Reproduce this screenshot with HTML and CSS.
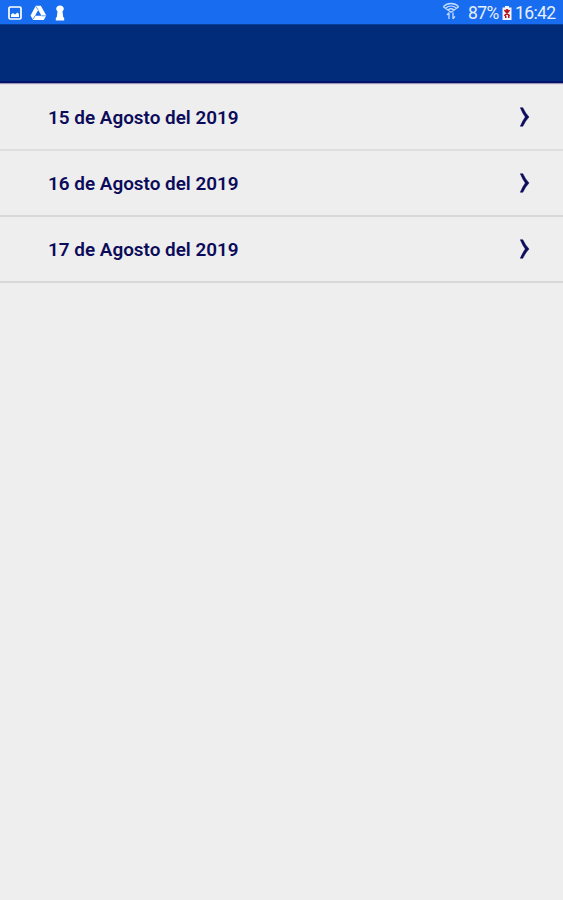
FILE: index.html
```html
<!DOCTYPE html>
<html lang="es">
<head>
<meta charset="utf-8">
<title>Agenda</title>
<link rel="stylesheet" href="styles.css">
</head>
<body>
<div class="status">
  <div class="notifications">
    <svg width="14" height="16" viewBox="0 0 14 16"><rect x="1" y="2" width="12" height="12" rx="1.3" fill="none" stroke="#fff" stroke-width="1.7"/><path d="M3 12V9.500l2-1.500 2 1.500 2.500-2L11 9v3z" fill="#fff"/></svg>
    <svg width="17" height="16" viewBox="0 0 17 16"><path fill="#fff" fill-rule="evenodd" d="M5.800 .8h5l5.500 9.700-2.500 4.500H3.200L.5 10.500zM8.200 5L5 10.800h6.500z"/><path d="M5 10.800L3.200 14M8.200 5L6 1.500M11.500 10.800H16" stroke="#186cf0" stroke-width=".7"/></svg>
    <svg width="10" height="16" viewBox="0 0 10 16"><path fill="#fff" d="M5 .5c2.300 0 3.800 1.300 3.800 3.200 0 1.300-.6 2-1.300 2.600L8.200 12l1 1v2.500H.8V13l1-1 .7-5.700C1.800 5.700 1.200 5 1.200 3.700 1.200 1.800 2.700.5 5 .5z"/></svg>
  </div>
  <div class="indicators">
    <svg class="wifi" width="18" height="18" viewBox="0 0 18 18" fill="none" stroke="#c5dcff" stroke-width="1.300"><path d="M1.300 4.700C5.500 .4 12.500 .4 16.700 4.700M3.600 6.300c3.200-2.800 7.600-2.800 10.800 0M6 8c1.800-1.500 4.200-1.500 6 0M1.300 4.700L9 10.300l7.700-5.600"/><path d="M7 10.500v6.500M5 13L7 10.700M11 10.500v6.500M11 16.700l2-2.300"/></svg>
    <span class="percent">87%</span>
    <svg class="battery" width="10" height="16" viewBox="0 0 10 16"><path fill="#f3f5fa" d="M3 1h4v1.500h2.500V15h-9V2.500H3z"/><path fill="none" stroke="#b91418" stroke-width="1.800" d="M2.500 5l5 6M7.500 5l-5 6M5 4v6M3 12h1.500M6 12h1.500"/></svg>
    <span class="clock">16:42</span>
  </div>
</div>
<header class="appbar"></header>
<main class="days">
  <div class="day"><span>15 de Agosto del 2019</span><svg class="chevron" width="10" height="20" viewBox="0 0 10 20"><path d="M.3 .7H2.800Q5.500 6.500 9 10 5.500 13.500 2.800 19.300H.3Q2.700 13.500 5.300 10 2.700 6.500 .3 .7z"/></svg></div>
  <div class="day"><span>16 de Agosto del 2019</span><svg class="chevron" width="10" height="20" viewBox="0 0 10 20"><path d="M.3 .7H2.800Q5.500 6.500 9 10 5.500 13.500 2.800 19.300H.3Q2.700 13.500 5.300 10 2.700 6.500 .3 .7z"/></svg></div>
  <div class="day"><span>17 de Agosto del 2019</span><svg class="chevron" width="10" height="20" viewBox="0 0 10 20"><path d="M.3 .7H2.800Q5.500 6.500 9 10 5.500 13.500 2.800 19.300H.3Q2.700 13.500 5.300 10 2.700 6.500 .3 .7z"/></svg></div>
</main>
</body>
</html>
```
FILE: styles.css
```css
* { box-sizing: border-box; }
body {
  margin: 0;
  min-height: 900px;
  background: #eee;
  font-family: Roboto, sans-serif;
}
svg { display: block; flex: none; }
.status {
  height: 24px;
  padding: 0 8px 0 8px;
  display: flex;
  justify-content: space-between;
  background: #186cf0;
  color: #e6efff;
}
.notifications, .indicators {
  display: flex;
  align-items: center;
  height: 25px;
}
.notifications { gap: 8px; }
.indicators { font-size: 17.5px; line-height: 24px; }
.wifi { margin: -3px 8px 0 0; }
.percent { width: 31px; letter-spacing: -.6px; white-space: nowrap; }
.battery { margin: 0 3px; }
.clock { width: 40px; letter-spacing: -.6px; white-space: nowrap; }
.appbar {
  height: 59px;
  background: #002c7a;
  border-top: 1px solid #064096;
  border-bottom: 2px solid #00126b;
  box-shadow: 0 1px 1px #9d95b5;
}
.days { padding-top: 1px; }
.day {
  height: 66px;
  padding: 0 33px 0 48px;
  display: flex;
  align-items: center;
  justify-content: space-between;
  border-bottom: 2px solid #d8d8d8;
  color: #0c0b5a;
  font-size: 18.9px;
  font-weight: 600;
  line-height: 24px;
}
.day:first-child { height: 67px; border-bottom-color: #dedede; }
.day span { padding-top: 2px; }
.chevron {
  fill: #0c0b5a;
  stroke: #0c0b5a;
  stroke-width: .5;
  stroke-linejoin: round;
}
```
